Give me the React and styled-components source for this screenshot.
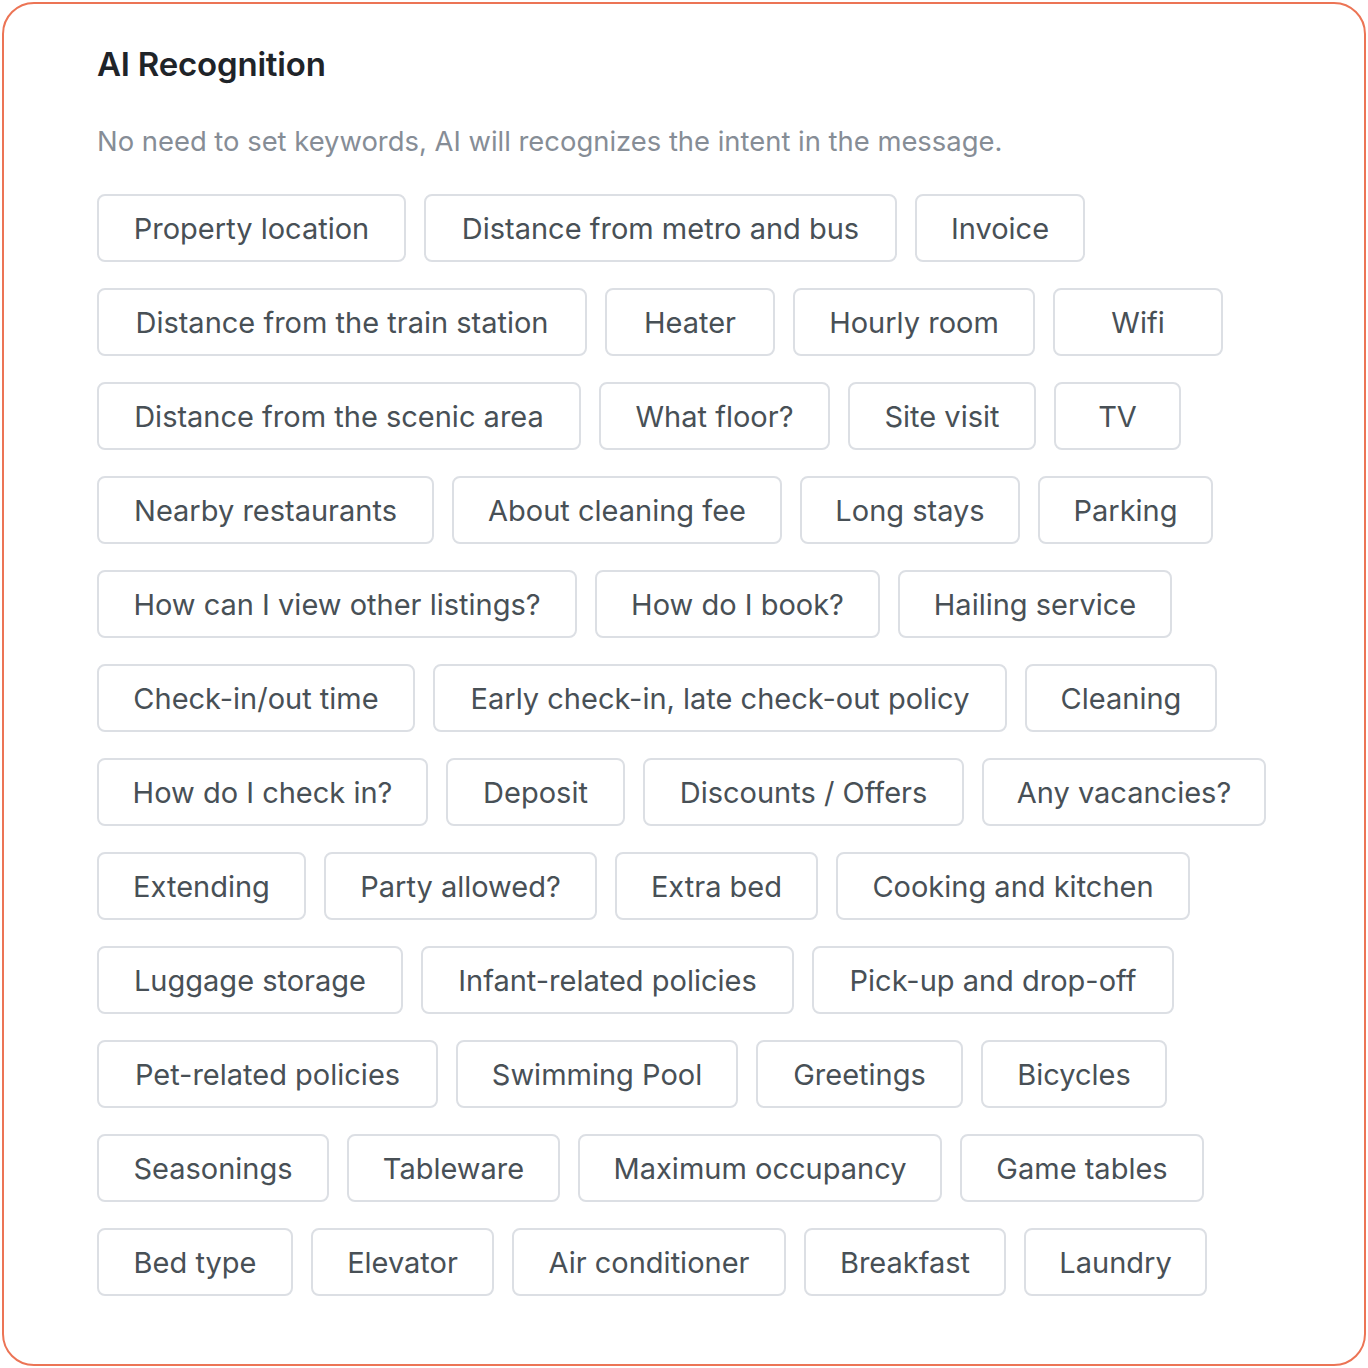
import React from "react";
import styled, {createGlobalStyle} from "styled-components";

const GlobalStyle = createGlobalStyle`
  body {
    margin: 0;
    background: #ffffff;
    font-family: Inter, "Liberation Sans", Arial, sans-serif;
  }
`;

const Card = styled.div`
  box-sizing: border-box;
  width: 1364px;
  height: 1364px;
  margin: 2px;
  border: 2px solid #ec7455;
  border-radius: 32px;
  background: #fff;
  padding: 39px 0 0 93px;
`;

const Title = styled.h2`
  margin: 0;
  font-size: 33px;
  line-height: 42px;
  font-weight: 600;
  color: #1f2429;
  letter-spacing: -0.2px;
`;

const Subtitle = styled.p`
  margin: 37px 0 0;
  font-size: 27.4px;
  line-height: 38px;
  color: #868d96;
`;

const TagList = styled.div`
  display: flex;
  flex-direction: column;
  gap: 26px;
  margin-top: 34px;
`;

const Row = styled.div`
  display: flex;
  gap: 18px;
`;

const Tag = styled.span`
  box-sizing: border-box;
  width: ${(p) => p.$w}px;
  height: 68px;
  display: inline-flex;
  align-items: center;
  justify-content: center;
  padding: 0 20px;
  border: 2px solid #dcdfe4;
  border-radius: 8px;
  font-size: 29px;
  color: #485056;
  white-space: nowrap;
`;

// [label, width] per row, in the order the tags wrap
const rows = [
    [['Property location', 309], ['Distance from metro and bus', 473], ['Invoice', 170]],
    [['Distance from the train station', 490], ['Heater', 170], ['Hourly room', 242], ['Wifi', 170]],
    [['Distance from the scenic area', 484], ['What floor?', 231], ['Site visit', 188], ['TV', 127]],
    [['Nearby restaurants', 337], ['About cleaning fee', 330], ['Long stays', 220], ['Parking', 175]],
    [['How can I view other listings?', 480], ['How do I book?', 285], ['Hailing service', 274]],
    [['Check-in/out time', 318], ['Early check-in, late check-out policy', 574], ['Cleaning', 192]],
    [['How do I check in?', 331], ['Deposit', 179], ['Discounts / Offers', 321], ['Any vacancies?', 284]],
    [['Extending', 209], ['Party allowed?', 273], ['Extra bed', 203], ['Cooking and kitchen', 354]],
    [['Luggage storage', 306], ['Infant-related policies', 373], ['Pick-up and drop-off', 362]],
    [['Pet-related policies', 341], ['Swimming Pool', 282], ['Greetings', 207], ['Bicycles', 186]],
    [['Seasonings', 232], ['Tableware', 213], ['Maximum occupancy', 364], ['Game tables', 244]],
    [['Bed type', 196], ['Elevator', 183], ['Air conditioner', 274], ['Breakfast', 202], ['Laundry', 183]],
];

const App = () => {
    return (
        <>
            <GlobalStyle/>
            <Card>
                <Title>AI Recognition</Title>
                <Subtitle>No need to set keywords, AI will recognizes the intent in the message.</Subtitle>
                <TagList>
                    {rows.map((row, i) => (
                        <Row key={i}>
                            {row.map(([label, w]) => <Tag key={label} $w={w}>{label}</Tag>)}
                        </Row>
                    ))}
                </TagList>
            </Card>
        </>
    );
};

export default App;
